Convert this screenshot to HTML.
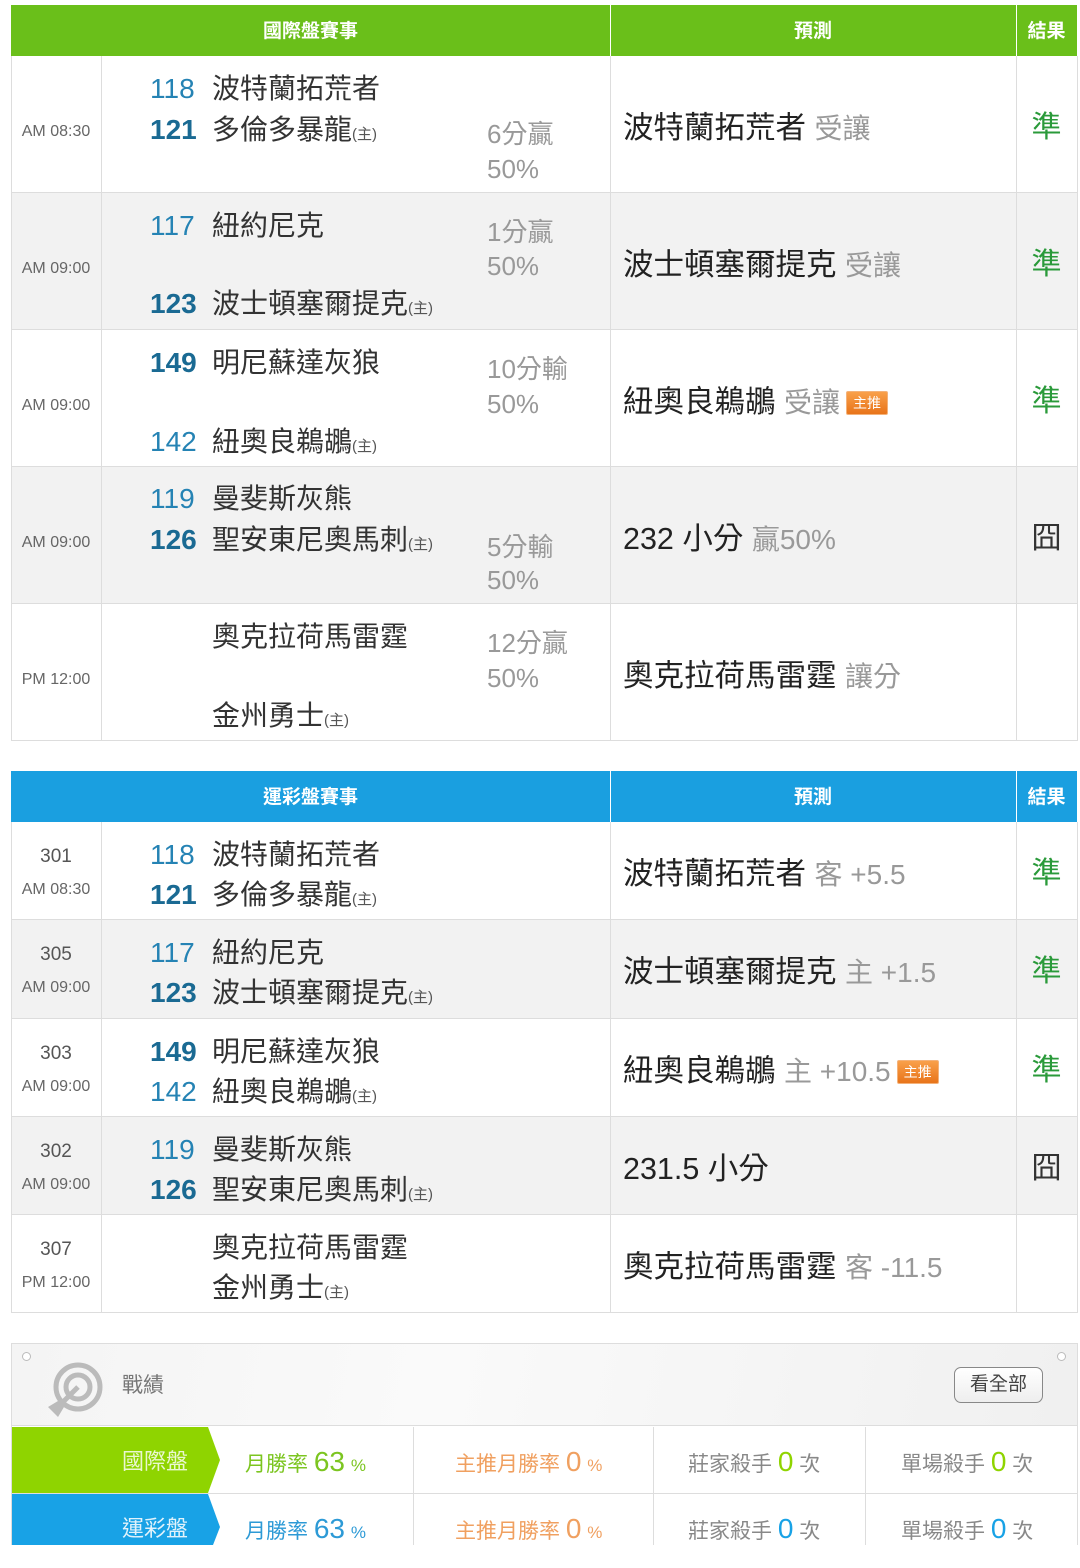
<!DOCTYPE html>
<html><head><meta charset="utf-8"><style>
*{margin:0;padding:0;box-sizing:border-box}
body{width:1080px;height:1568px;background:#fff;position:relative;overflow:hidden;font-family:"Liberation Sans","Noto Sans CJK TC",sans-serif;color:#333}
.a{position:absolute}
.t{position:absolute;height:40px;line-height:40px;white-space:nowrap;margin-top:2px}
.hd{color:#fff;font-size:19px;font-weight:bold;text-align:center;height:51px;line-height:53px}
.time{font-size:16px;color:#666;left:11px;width:90px;text-align:center}
.n{font-size:28px;color:#2583b4;left:150px}
.nb{font-weight:bold;color:#1a6a93}
.nm{font-size:28px;color:#333;left:212px}
.h{font-size:15px;color:#555}
.sc{font-size:26px;color:#999;left:487px}
.pr{font-size:30.5px;color:#222;left:623px}
.g{color:#999;font-size:28px}
.res{font-size:30px;left:1016px;width:61px;text-align:center}
.ok{color:#2a9a3a}
.badge{display:inline-block;background:linear-gradient(#f9a04a,#e8741a);color:#fff;font-size:14px;line-height:22px;height:24px;width:42px;text-align:center;border-radius:2px;vertical-align:4px;margin-left:6px;border:1px solid #f4b27a}
.row{position:absolute;left:11px;width:1066px;border-bottom:1px solid #ddd}
.vl{position:absolute;width:1px;background:#ddd}
</style></head><body>

<!-- Table 1 -->
<div class="a" style="left:11px;top:5px;width:1066px;height:51px;background:#6abf1a"></div>
<div class="a hd" style="left:11px;top:5px;width:599px">國際盤賽事</div>
<div class="a hd" style="left:610px;top:5px;width:406px">預測</div>
<div class="a hd" style="left:1016px;top:5px;width:61px">結果</div>
<div class="vl" style="left:610px;top:5px;height:51px;background:#fff"></div>
<div class="vl" style="left:1016px;top:5px;height:51px;background:#fff"></div>

<div class="row" style="top:56px;height:137px;background:#fff"></div>
<div class="row" style="top:193px;height:137px;background:#f2f2f2"></div>
<div class="row" style="top:330px;height:137px;background:#fff"></div>
<div class="row" style="top:467px;height:137px;background:#f2f2f2"></div>
<div class="row" style="top:604px;height:137px;background:#fff"></div>
<div class="vl" style="left:11px;top:56px;height:685px"></div>
<div class="vl" style="left:101px;top:56px;height:685px"></div>
<div class="vl" style="left:610px;top:56px;height:685px"></div>
<div class="vl" style="left:1016px;top:56px;height:685px"></div>
<div class="vl" style="left:1077px;top:56px;height:685px"></div>

<div class="t time" style="top:110px">AM 08:30</div>
<div class="t n" style="top:67px">118</div><div class="t nm" style="top:67px">波特蘭拓荒者</div>
<div class="t n nb" style="top:108px">121</div><div class="t nm" style="top:108px">多倫多暴龍<span class="h">(主)</span></div>
<div class="t sc" style="top:112px">6分贏</div><div class="t sc" style="top:147px">50%</div>
<div class="t pr" style="top:106px">波特蘭拓荒者 <span class="g">受讓</span></div>
<div class="t res ok" style="top:106px">準</div>

<div class="t time" style="top:247px">AM 09:00</div>
<div class="t n" style="top:204px">117</div><div class="t nm" style="top:204px">紐約尼克</div>
<div class="t n nb" style="top:282px">123</div><div class="t nm" style="top:282px">波士頓塞爾提克<span class="h">(主)</span></div>
<div class="t sc" style="top:210px">1分贏</div><div class="t sc" style="top:244px">50%</div>
<div class="t pr" style="top:243px">波士頓塞爾提克 <span class="g">受讓</span></div>
<div class="t res ok" style="top:243px">準</div>

<div class="t time" style="top:384px">AM 09:00</div>
<div class="t n nb" style="top:341px">149</div><div class="t nm" style="top:341px">明尼蘇達灰狼</div>
<div class="t n" style="top:420px">142</div><div class="t nm" style="top:420px">紐奧良鵜鶘<span class="h">(主)</span></div>
<div class="t sc" style="top:347px">10分輸</div><div class="t sc" style="top:382px">50%</div>
<div class="t pr" style="top:380px">紐奧良鵜鶘 <span class="g">受讓</span><span class="badge">主推</span></div>
<div class="t res ok" style="top:380px">準</div>

<div class="t time" style="top:521px">AM 09:00</div>
<div class="t n" style="top:477px">119</div><div class="t nm" style="top:477px">曼斐斯灰熊</div>
<div class="t n nb" style="top:518px">126</div><div class="t nm" style="top:518px">聖安東尼奧馬刺<span class="h">(主)</span></div>
<div class="t sc" style="top:525px">5分輸</div><div class="t sc" style="top:558px">50%</div>
<div class="t pr" style="top:517px">232 小分 <span class="g">贏50%</span></div>
<div class="t res" style="top:517px;color:#333">囧</div>

<div class="t time" style="top:658px">PM 12:00</div>
<div class="t nm" style="top:615px">奧克拉荷馬雷霆</div>
<div class="t nm" style="top:694px">金州勇士<span class="h">(主)</span></div>
<div class="t sc" style="top:621px">12分贏</div><div class="t sc" style="top:656px">50%</div>
<div class="t pr" style="top:654px">奧克拉荷馬雷霆 <span class="g">讓分</span></div>

<!-- Table 2 -->
<div class="a" style="left:11px;top:771px;width:1066px;height:51px;background:#1a9fe0"></div>
<div class="a hd" style="left:11px;top:771px;width:599px">運彩盤賽事</div>
<div class="a hd" style="left:610px;top:771px;width:406px">預測</div>
<div class="a hd" style="left:1016px;top:771px;width:61px">結果</div>
<div class="vl" style="left:610px;top:771px;height:51px;background:#fff"></div>
<div class="vl" style="left:1016px;top:771px;height:51px;background:#fff"></div>

<div class="row" style="top:822px;height:98px;background:#fff"></div>
<div class="row" style="top:920px;height:99px;background:#f2f2f2"></div>
<div class="row" style="top:1019px;height:98px;background:#fff"></div>
<div class="row" style="top:1117px;height:98px;background:#f2f2f2"></div>
<div class="row" style="top:1215px;height:98px;background:#fff"></div>
<div class="vl" style="left:11px;top:822px;height:491px"></div>
<div class="vl" style="left:101px;top:822px;height:491px"></div>
<div class="vl" style="left:610px;top:822px;height:491px"></div>
<div class="vl" style="left:1016px;top:822px;height:491px"></div>
<div class="vl" style="left:1077px;top:822px;height:491px"></div>

<div class="t time" style="top:835px;font-size:19px;color:#555">301</div>
<div class="t time" style="top:868px">AM 08:30</div>
<div class="t n" style="top:833px">118</div><div class="t nm" style="top:833px">波特蘭拓荒者</div>
<div class="t n nb" style="top:873px">121</div><div class="t nm" style="top:873px">多倫多暴龍<span class="h">(主)</span></div>
<div class="t pr" style="top:852px">波特蘭拓荒者 <span class="g">客 +5.5</span></div>
<div class="t res ok" style="top:852px">準</div>

<div class="t time" style="top:933px;font-size:19px;color:#555">305</div>
<div class="t time" style="top:966px">AM 09:00</div>
<div class="t n" style="top:931px">117</div><div class="t nm" style="top:931px">紐約尼克</div>
<div class="t n nb" style="top:971px">123</div><div class="t nm" style="top:971px">波士頓塞爾提克<span class="h">(主)</span></div>
<div class="t pr" style="top:950px">波士頓塞爾提克 <span class="g">主 +1.5</span></div>
<div class="t res ok" style="top:950px">準</div>

<div class="t time" style="top:1032px;font-size:19px;color:#555">303</div>
<div class="t time" style="top:1065px">AM 09:00</div>
<div class="t n nb" style="top:1030px">149</div><div class="t nm" style="top:1030px">明尼蘇達灰狼</div>
<div class="t n" style="top:1070px">142</div><div class="t nm" style="top:1070px">紐奧良鵜鶘<span class="h">(主)</span></div>
<div class="t pr" style="top:1049px">紐奧良鵜鶘 <span class="g">主 +10.5</span><span class="badge">主推</span></div>
<div class="t res ok" style="top:1049px">準</div>

<div class="t time" style="top:1130px;font-size:19px;color:#555">302</div>
<div class="t time" style="top:1163px">AM 09:00</div>
<div class="t n" style="top:1128px">119</div><div class="t nm" style="top:1128px">曼斐斯灰熊</div>
<div class="t n nb" style="top:1168px">126</div><div class="t nm" style="top:1168px">聖安東尼奧馬刺<span class="h">(主)</span></div>
<div class="t pr" style="top:1147px">231.5 小分</div>
<div class="t res" style="top:1147px;color:#333">囧</div>

<div class="t time" style="top:1228px;font-size:19px;color:#555">307</div>
<div class="t time" style="top:1261px">PM 12:00</div>
<div class="t nm" style="top:1226px">奧克拉荷馬雷霆</div>
<div class="t nm" style="top:1266px">金州勇士<span class="h">(主)</span></div>
<div class="t pr" style="top:1245px">奧克拉荷馬雷霆 <span class="g">客 -11.5</span></div>

<!-- Stats -->
<div class="a" style="left:11px;top:1343px;width:1067px;height:202px;border:1px solid #ddd;border-bottom:none;background:#fff"></div>
<div class="a" style="left:12px;top:1344px;width:1065px;height:82px;background:linear-gradient(100deg,#f4f4f4,#fafafa 40%,#f0f0f0);border-bottom:1px solid #ddd"></div>
<div class="a" style="left:22px;top:1352px;width:9px;height:9px;border:1px solid #bbb;border-radius:50%;background:#fff"></div>
<div class="a" style="left:1057px;top:1352px;width:9px;height:9px;border:1px solid #bbb;border-radius:50%;background:#fff"></div>
<svg class="a" style="left:44px;top:1360px" width="64" height="62" viewBox="0 0 64 62">
<circle cx="34" cy="27" r="22" fill="none" stroke="#bbb" stroke-width="5"/>
<circle cx="34" cy="27" r="12" fill="none" stroke="#bbb" stroke-width="5"/>
<line x1="34" y1="27" x2="14" y2="47" stroke="#bbb" stroke-width="5"/>
<polygon points="4,47 14,41 20,47 14,57" fill="#bbb"/>
</svg>
<div class="t" style="left:122px;top:1364px;font-size:21px;color:#777">戰績</div>
<div class="a" style="left:954px;top:1367px;width:89px;height:36px;border:1px solid #888;border-radius:7px;background:linear-gradient(#fff,#eee);font-size:19px;line-height:34px;text-align:center;color:#444">看全部</div>

<div class="a" style="left:12px;top:1427px;width:196px;height:66px;background:#8fd400"></div>
<svg class="a" style="left:207px;top:1427px" width="14" height="66"><polygon points="0,0 1,0 13,33 1,66 0,66" fill="#8fd400"/></svg>
<div class="a" style="left:12px;top:1494px;width:196px;height:51px;background:#18a2e6"></div>
<svg class="a" style="left:207px;top:1494px" width="14" height="51"><polygon points="0,0 1,0 13,33 6,51 0,51" fill="#18a2e6"/></svg>
<div class="a" style="left:12px;top:1493px;width:1065px;height:1px;background:#ddd"></div>
<div class="vl" style="left:413px;top:1427px;height:118px"></div>
<div class="vl" style="left:653px;top:1427px;height:118px"></div>
<div class="vl" style="left:865px;top:1427px;height:118px"></div>

<div class="t" style="left:12px;width:176px;text-align:right;top:1440px;font-size:22px;color:#eaf7d0">國際盤</div>
<div class="t" style="left:12px;width:176px;text-align:right;top:1507px;font-size:22px;color:#e0f2fb">運彩盤</div>
<div class="t" style="left:245px;top:1440px;font-size:21px;color:#7cc520">月勝率 <span style="font-size:28px">63</span> <span style="font-size:17px">%</span></div>
<div class="t" style="left:245px;top:1507px;font-size:21px;color:#2d9ad6">月勝率 <span style="font-size:28px">63</span> <span style="font-size:17px">%</span></div>
<div class="t" style="left:455px;top:1440px;font-size:21px;color:#f0a060">主推月勝率 <span style="font-size:28px">0</span> <span style="font-size:17px">%</span></div>
<div class="t" style="left:455px;top:1507px;font-size:21px;color:#f0a060">主推月勝率 <span style="font-size:28px">0</span> <span style="font-size:17px">%</span></div>
<div class="t" style="left:688px;top:1440px;font-size:21px;color:#888">莊家殺手 <span style="font-size:28px;color:#8fd400">0</span> 次</div>
<div class="t" style="left:688px;top:1507px;font-size:21px;color:#888">莊家殺手 <span style="font-size:28px;color:#18a2e6">0</span> 次</div>
<div class="t" style="left:901px;top:1440px;font-size:21px;color:#888">單場殺手 <span style="font-size:28px;color:#8fd400">0</span> 次</div>
<div class="t" style="left:901px;top:1507px;font-size:21px;color:#888">單場殺手 <span style="font-size:28px;color:#18a2e6">0</span> 次</div>
</body></html>
